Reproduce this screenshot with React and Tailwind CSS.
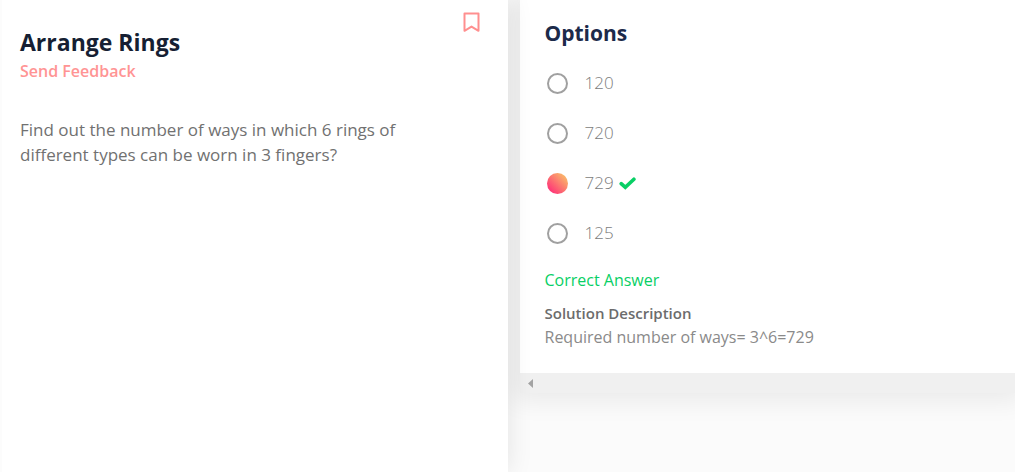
import { useState } from "react";

const choices = [
  { value: "120", correct: false },
  { value: "720", correct: false },
  { value: "729", correct: true },
  { value: "125", correct: false },
];

function BookmarkIcon() {
  return (
    <svg width="17" height="21" viewBox="0 0 17 21" fill="none" stroke="#ff8f8f" strokeWidth="2" strokeLinejoin="round" aria-hidden="true">
      <path d="M1.5 1.5h14v17.3l-7-4.2-7 4.2z" />
    </svg>
  );
}

function CheckIcon() {
  return (
    <svg width="17" height="13" viewBox="0 0 17 13" fill="none" stroke="#08cf65" strokeWidth="3.6" strokeLinecap="round" aria-hidden="true">
      <path d="M2.2 6.6 6.3 10.4 14.9 2.2" />
    </svg>
  );
}

function Choice({ value, correct, checked, onSelect }) {
  return (
    <label className="flex h-[50px] items-center">
      <input
        type="radio"
        name="answer"
        value={value}
        checked={checked}
        onChange={onSelect}
        className="ml-0.5 size-[21px] appearance-none rounded-full border-2 border-[#a0a0a0] bg-white checked:border-0 checked:bg-linear-to-tr/srgb checked:from-[#ff2d78] checked:from-10% checked:to-[#f9c668] checked:to-95%"
      />
      <span className="ml-[17px] text-[17px] leading-6 font-light text-[#7c7c7c]">{value}</span>
      {correct && (
        <span className="ml-[5px]">
          <CheckIcon />
        </span>
      )}
    </label>
  );
}

export default function App() {
  const [answer, setAnswer] = useState("729");

  return (
    <main className="flex min-h-screen items-stretch overflow-hidden bg-[#fbfbfb] font-['Open_Sans','Noto_Sans',sans-serif]">
      <section className="relative w-1/2 shrink-0 border-l-2 border-[#fcfcfc] bg-white pt-7 pr-[27px] pl-[18px] shadow-[0_0_24px_rgba(0,0,0,0.1)]">
        <button type="button" aria-label="Bookmark" className="absolute top-3 right-7">
          <BookmarkIcon />
        </button>
        <h1 className="text-[23px] leading-7 font-bold text-[#161f33]">Arrange Rings</h1>
        <a href="#feedback" className="mt-[3px] block text-base leading-6 font-semibold text-[#ff9494]">
          Send Feedback
        </a>
        <p className="mt-[34px] max-w-[400px] text-[17px] leading-[25px] text-[#717171]">
          Find out the number of ways in which 6 rings of different types can be worn in 3 fingers?
        </p>
      </section>

      <section className="ml-3 min-w-0 flex-1 self-start bg-white shadow-[0_0_24px_8px_rgba(0,0,0,0.07)]">
        <div className="px-[25px] pt-[19px] pb-6">
          <fieldset>
            <legend className="text-[21px] leading-7 font-bold text-[#1c2a4a]">Options</legend>
            <div className="mt-[11px]">
              {choices.map((choice) => (
                <Choice
                  key={choice.value}
                  value={choice.value}
                  correct={choice.correct}
                  checked={answer === choice.value}
                  onSelect={() => setAnswer(choice.value)}
                />
              ))}
            </div>
          </fieldset>
          <p className="mt-2.5 text-base leading-6 text-[#08cf65]">Correct Answer</p>
          <h2 className="mt-[9px] text-[15px] leading-6 font-semibold text-[#6c6c6c]">Solution Description</h2>
          <p className="text-base leading-6 text-[#8a8a8a]">Required number of ways= 3^6=729</p>
        </div>
        <div className="flex h-5 items-center bg-[#f0f0f0] pl-2">
          <svg width="5" height="9" viewBox="0 0 5 9" fill="#a3a3a3" aria-hidden="true">
            <path d="M5 0v9L0 4.5z" />
          </svg>
        </div>
      </section>
    </main>
  );
}
